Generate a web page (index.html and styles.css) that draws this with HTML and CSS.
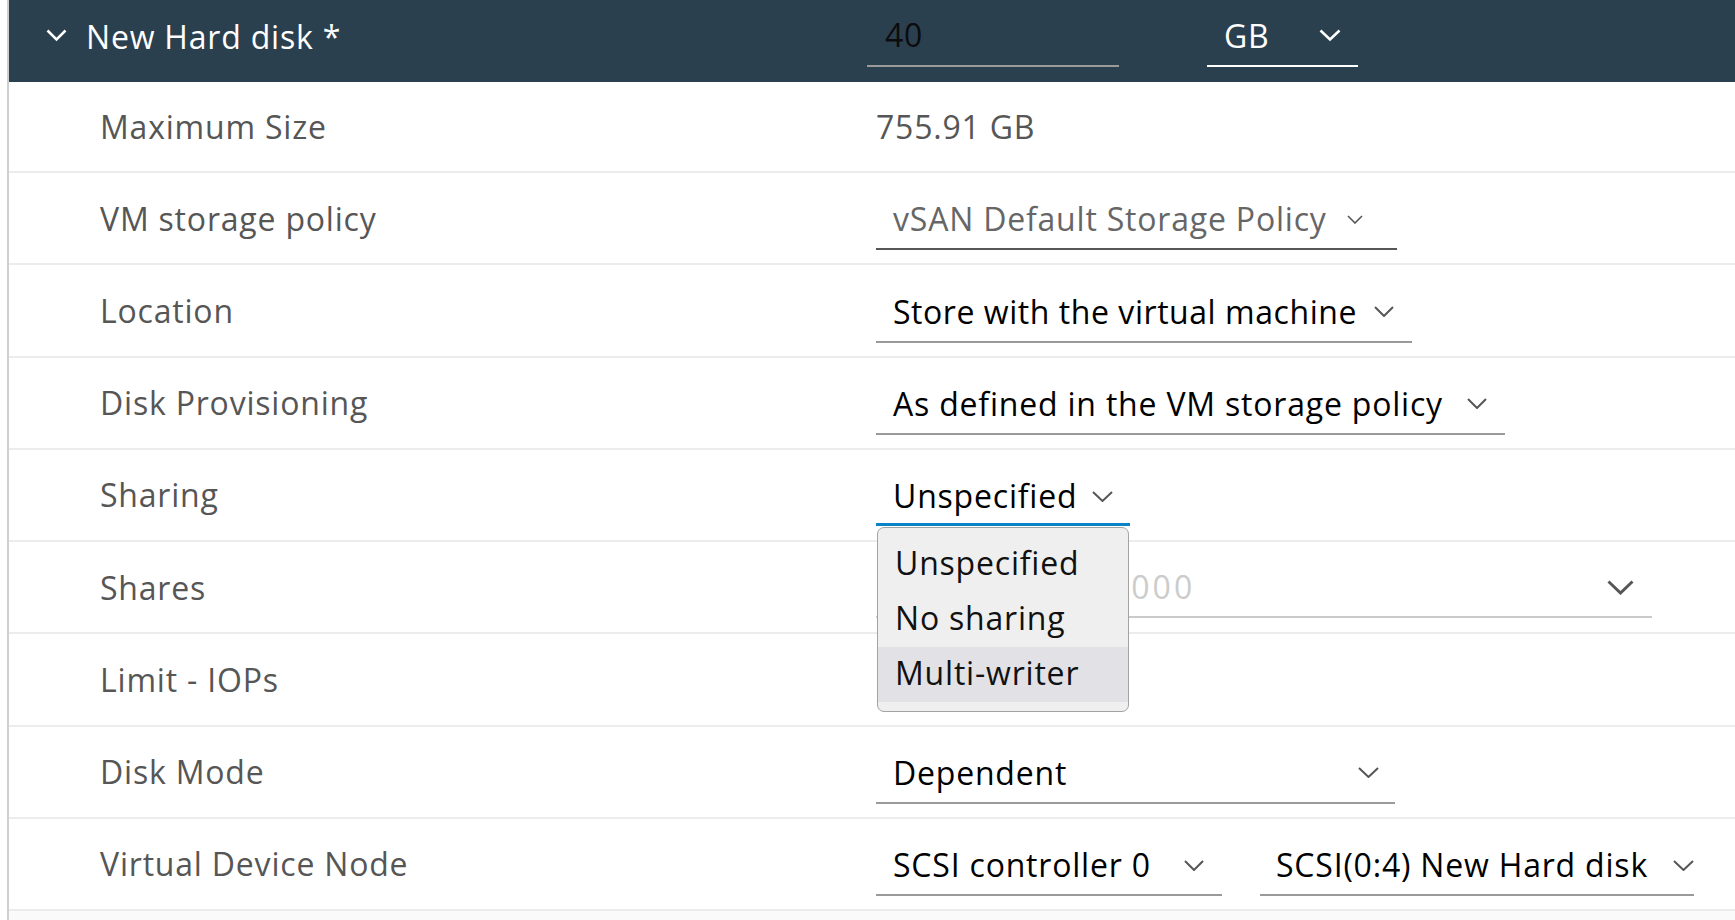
FILE: index.html
```html
<!DOCTYPE html>
<html lang="en">
<head>
  <meta charset="UTF-8" />
  <meta name="viewport" content="width=device-width, initial-scale=1" />
  <title>New Hard disk</title>
  <link rel="stylesheet" href="styles.css">
</head>
<body>

  <div class="panel">
    <div class="stack-header">
      <div class="title-group">
        <svg class="caret" width="21" height="13" viewBox="0 0 21 13"><polyline points="1.5,1.5 10.5,10.5 19.5,1.5" fill="none" stroke="#fff" stroke-width="2.5"/></svg>
        <span class="title">New Hard disk *</span>
      </div>
      <div class="size-input">40</div>
      <div class="unit-select">
        <span>GB</span>
        <svg width="22" height="13" viewBox="0 0 22 13"><polyline points="1.5,1.5 11,10.5 20.5,1.5" fill="none" stroke="#fff" stroke-width="2.5"/></svg>
      </div>
    </div>

    <div class="row first">
      <div class="label">Maximum Size</div>
      <div class="value plain">755.91 GB</div>
    </div>

    <div class="row">
      <div class="label">VM storage policy</div>
      <div class="value">
        <div class="select sel-policy">
          <span>vSAN Default Storage Policy</span>
          <svg width="16" height="9" viewBox="0 0 16 9"><polyline points="1,1 8,8 15,1" fill="none" stroke="#565656" stroke-width="1.6"/></svg>
        </div>
      </div>
    </div>

    <div class="row">
      <div class="label">Location</div>
      <div class="value">
        <div class="select sel-location">
          <span>Store with the virtual machine</span>
          <svg width="20" height="11" viewBox="0 0 20 11"><polyline points="1,1 10,10 19,1" fill="none" stroke="#565656" stroke-width="2"/></svg>
        </div>
      </div>
    </div>

    <div class="row">
      <div class="label">Disk Provisioning</div>
      <div class="value">
        <div class="select sel-provision">
          <span>As defined in the VM storage policy</span>
          <svg width="20" height="11" viewBox="0 0 20 11"><polyline points="1,1 10,10 19,1" fill="none" stroke="#565656" stroke-width="2"/></svg>
        </div>
      </div>
    </div>

    <div class="row">
      <div class="label">Sharing</div>
      <div class="value">
        <div class="select sel-sharing">
          <span>Unspecified</span>
          <svg width="21" height="11" viewBox="0 0 21 11"><polyline points="1,1 10.5,10 20,1" fill="none" stroke="#565656" stroke-width="2"/></svg>

          <div class="menu">
            <div class="menu-item">Unspecified</div>
            <div class="menu-item">No sharing</div>
            <div class="menu-item active">Multi-writer</div>
          </div>
        </div>
      </div>
    </div>

    <div class="row">
      <div class="label">Shares</div>
      <div class="value">
        <div class="select sel-shares">
          <span>1000</span>
          <svg width="27" height="15" viewBox="0 0 27 15"><polyline points="1.5,1.5 13.5,13 25.5,1.5" fill="none" stroke="#565656" stroke-width="3"/></svg>
        </div>
      </div>
    </div>

    <div class="row">
      <div class="label">Limit - IOPs</div>
      <div class="value"></div>
    </div>

    <div class="row">
      <div class="label">Disk Mode</div>
      <div class="value">
        <div class="select sel-mode">
          <span>Dependent</span>
          <svg width="21" height="11" viewBox="0 0 21 11"><polyline points="1,1 10.5,10 20,1" fill="none" stroke="#565656" stroke-width="2"/></svg>
        </div>
      </div>
    </div>

    <div class="row">
      <div class="label">Virtual Device Node</div>
      <div class="value">
        <div class="select sel-controller">
          <span>SCSI controller 0</span>
          <svg width="20" height="11" viewBox="0 0 20 11"><polyline points="1,1 10,10 19,1" fill="none" stroke="#565656" stroke-width="2"/></svg>
        </div>
        <div class="select sel-node">
          <span>SCSI(0:4) New Hard disk</span>
          <svg width="21" height="11" viewBox="0 0 21 11"><polyline points="1,1 10.5,10 20,1" fill="none" stroke="#565656" stroke-width="2"/></svg>
        </div>
      </div>
    </div>
  </div>

</body>
</html>
```

FILE: styles.css
```css
* {
  box-sizing: border-box;
}

body {
  font-family: "Open Sans", "Noto Sans", sans-serif;
  font-size: 32px;
  letter-spacing: 0.8px;
  margin: 0;
  background-color: #fff;
  overflow: hidden;
}

.panel {
  margin-left: 7px;
  border-left: 2px solid #cfcfcf;
  min-height: 100vh;
  background-color: #fafafa;
}

/* header bar */
.stack-header {
  display: flex;
  align-items: flex-start;
  height: 82px;
  padding: 15px 0 0 37px;
  background-color: #2b404f;
}

.title-group {
  display: flex;
  align-items: center;
  gap: 19px;
  width: 821px;
  height: 44px;
  flex-shrink: 0;
}

.caret {
  margin-top: -4px;
}

.title {
  color: #fff;
  line-height: 44px;
}

.size-input {
  width: 252px;
  height: 52px;
  padding: 0 0 10px 18px;
  line-height: 40px;
  color: #0c0c0c;
  border-bottom: 2px solid #9b9b9b;
}

.unit-select {
  display: flex;
  align-items: center;
  justify-content: space-between;
  width: 151px;
  height: 52px;
  margin-left: 88px;
  padding: 0 17px 10px 17px;
  color: #fff;
  border-bottom: 2px solid #fff;
}

/* property rows */
.row {
  display: flex;
  height: 92.25px;
  padding-left: 91px;
  background-color: #fff;
  border-bottom: 2px solid #ececec;
}

.row.first {
  height: 91px;
}

.label {
  width: 776px;
  flex-shrink: 0;
  align-self: center;
  color: #565656;
}

.value {
  display: flex;
  align-items: flex-end;
  gap: 38px;
  padding-bottom: 13px;
}

.value.plain {
  align-items: center;
  padding-bottom: 0;
  color: #565656;
}

.select {
  display: flex;
  align-items: center;
  justify-content: space-between;
  height: 51px;
  padding: 0 18px 9px 17px;
  line-height: 40px;
  color: #000;
  border-bottom: 2px solid #9a9a9a;
  white-space: nowrap;
}

.sel-policy {
  width: 521px;
  padding-right: 34px;
  color: #666;
  border-bottom-color: #565656;
}

.sel-location {
  width: 536px;
  letter-spacing: 0.55px;
}

.sel-provision {
  width: 629px;
}

.sel-sharing {
  position: relative;
  width: 254px;
  height: 50px;
  margin-bottom: 1px;
  padding-bottom: 7px;
  padding-right: 17px;
  border-bottom: 3px solid #0a84c6;
}

.sel-shares {
  width: 776px;
  margin-bottom: 1px;
  padding-left: 234px;
  letter-spacing: 3px;
  color: #cccccc;
  border-bottom-color: #cacaca;
}

.sel-mode {
  width: 519px;
  padding-right: 16px;
}

.sel-controller {
  width: 346px;
}

.sel-node {
  width: 434px;
  padding: 0 0 9px 16px;
}

/* open dropdown of the Sharing select */
.menu {
  position: absolute;
  top: calc(100% + 4px);
  left: 1px;
  z-index: 10;
  width: 252px;
  padding: 9px 0;
  background-color: #efefef;
  border: 1px solid #a3a3a3;
  border-radius: 7px;
  overflow: hidden;
  letter-spacing: 0.8px;
}

.menu-item {
  height: 55px;
  padding: 0 0 4px 17px;
  line-height: 51px;
  color: #111;
}

.menu-item.active {
  background-color: #e1e1e6;
}
```
